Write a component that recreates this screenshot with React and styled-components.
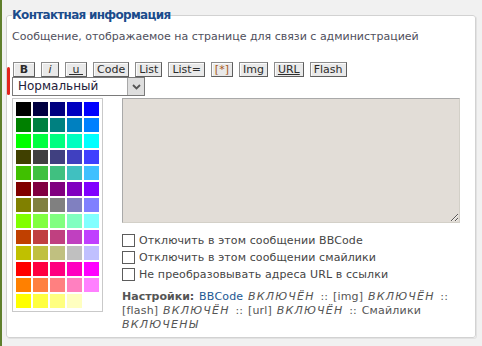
import React from 'react';
import styled, { createGlobalStyle } from 'styled-components';

const GlobalStyle = createGlobalStyle`
  html, body {
    margin: 0;
    padding: 0;
    background: #f1f1f1;
  }
  body {
    font-family: "DejaVu Sans", Verdana, sans-serif;
  }
`;

const Page = styled.div`
  position: relative;
  box-sizing: border-box;
  height: 346px;
  border-left: 2px solid #5f7f2c;
  padding: 8px 6px 0 4px;
`;

const EditMark = styled.span`
  position: absolute;
  left: 5px;
  top: 67px;
  width: 3px;
  height: 28px;
  border-radius: 2px;
  background: #e3241d;
`;

const Fieldset = styled.fieldset`
  margin: 0;
  min-width: 0;
  height: 330px;
  box-sizing: border-box;
  padding: 0 5px;
  background: #fff;
  border: 1px solid #d2d2d2;
  border-radius: 3px;
  box-shadow: 1px 1px 0 #e2e2e2;
`;

const Legend = styled.legend`
  padding: 0;
  font-size: 12px;
  font-weight: bold;
  line-height: 15px;
  letter-spacing: -0.7px;
  color: #1b4c8c;
`;

const Description = styled.p`
  margin: 7px 0 0;
  font-size: 11px;
  line-height: 14px;
  color: #4f4f5c;
`;

const Toolbar = styled.div`
  display: flex;
  gap: 6px;
  margin-top: 18px;
  padding-left: 1px;
`;

const TagButton = styled.button`
  box-sizing: border-box;
  height: 15px;
  min-width: ${p => p.$width || 0}px;
  margin: 0;
  padding: 0 3px;
  font-family: "DejaVu Sans", Verdana, sans-serif;
  font-size: 11px;
  line-height: 13px;
  font-weight: ${p => (p.$bold ? 'bold' : 'normal')};
  font-style: ${p => (p.$italic ? 'italic' : 'normal')};
  text-decoration: ${p => (p.$underline ? 'underline' : 'none')};
  color: ${p => p.$tint || '#2c2c2c'};
  background: #e9e9e9;
  border: 1px solid;
  border-color: #8c8c8c #5e5e5e #5e5e5e #8c8c8c;
  box-shadow: inset 1px 1px 0 #fbfbfb;
  border-radius: 0;
  white-space: pre;
`;

const SizeSelect = styled.div`
  display: flex;
  box-sizing: border-box;
  width: 133px;
  height: 19px;
  border: 1px solid #7a7a7a;
  background: #fff;
`;

const SelectValue = styled.span`
  flex: 1;
  padding-left: 5px;
  font-size: 12px;
  line-height: 17px;
  color: #24203a;
`;

const SelectArrow = styled.span`
  display: flex;
  align-items: center;
  justify-content: center;
  width: 16px;
  background: #dedede;
  border-left: 1px solid #a8a8a8;
`;

const EditorRow = styled.div`
  display: flex;
  gap: 19px;
  margin-top: 2px;
`;

const Palette = styled.div`
  display: grid;
  grid-template-columns: repeat(5, 15px);
  grid-auto-rows: 14px;
  gap: 2px;
  align-self: flex-start;
  padding: 3px;
  border: 1px solid #c9c9c9;
  background: #fff;
`;

const Swatch = styled.span`
  background: ${p => p.$color};
`;

const MainColumn = styled.div`
  display: flex;
  flex-direction: column;
  width: 338px;
`;

const MessageArea = styled.textarea`
  display: block;
  box-sizing: border-box;
  width: 338px;
  height: 125px;
  margin: 0;
  padding: 2px;
  background: #e2ddd7;
  border: 1px solid;
  border-color: #a9a9a9 #d3d0c8 #d3d0c8 #a9a9a9;
  outline: none;
`;

const Options = styled.div`
  margin-top: 9px;
`;

const OptionRow = styled.label`
  display: flex;
  align-items: center;
  height: 17px;
  font-size: 11px;
  letter-spacing: 0.1px;
  color: #454545;
`;

const Check = styled.input`
  appearance: none;
  box-sizing: border-box;
  width: 13px;
  height: 13px;
  margin: 0 4px 0 0;
  border: 1px solid #5c5c5c;
  background: #fff;
`;

const Settings = styled.div`
  margin-top: 7px;
  font-size: 11px;
  line-height: 14px;
  letter-spacing: 0.2px;
  word-spacing: 1px;
  color: #555;
`;

const Run = styled.span`
  color: ${p => (p.$link ? '#1d5793' : 'inherit')};
  font-weight: ${p => (p.$bold ? 'bold' : 'normal')};
  font-style: ${p => (p.$state ? 'italic' : 'normal')};
  letter-spacing: ${p => (p.$state ? '1.2px' : p.$bold ? '0' : 'inherit')};
`;

const buttons = [
  { label: 'B', bold: true, width: 22 },
  { label: 'i', italic: true, width: 18 },
  { label: '\u00a0u\u00a0', underline: true, width: 22 },
  { label: 'Code' },
  { label: 'List' },
  { label: 'List=' },
  { label: '[*]', tint: '#a8581c' },
  { label: 'Img' },
  { label: 'URL', underline: true },
  { label: 'Flash' },
];

const settingsRuns = [
  { text: 'Настройки:', bold: true },
  { text: 'BBCode', link: true },
  { text: 'ВКЛЮЧЁН', state: true },
  { text: '::' },
  { text: '[img]' },
  { text: 'ВКЛЮЧЁН', state: true },
  { text: '::' },
  { text: '[flash]' },
  { text: 'ВКЛЮЧЁН', state: true },
  { text: '::' },
  { text: '[url]' },
  { text: 'ВКЛЮЧЁН', state: true },
  { text: '::' },
  { text: 'Смайлики' },
  { text: 'ВКЛЮЧЕНЫ', state: true },
];

const levels = ['00', '40', '80', 'C0', 'FF'];
const paletteRows = [
  ['00', '00'], ['00', '80'], ['00', 'FF'],
  ['40', '40'], ['40', 'C0'],
  ['80', '00'], ['80', '80'], ['80', 'FF'],
  ['C0', '40'], ['C0', 'C0'],
  ['FF', '00'], ['FF', '80'], ['FF', 'FF'],
];

const App = () => {
  const swatches = [];
  paletteRows.forEach(([r, g], row) => {
    levels.forEach((b, col) => {
      const isLast = row === paletteRows.length - 1 && col === 4;
      swatches.push(
        <Swatch key={`${row}-${col}`} $color={isLast ? 'transparent' : `#${r}${g}${b}`} />
      );
    });
  });

  return (
    <Page>
      <GlobalStyle />
      <EditMark />
      <Fieldset>
        <Legend>Контактная информация</Legend>
        <Description>Сообщение, отображаемое на странице для связи с администрацией</Description>

        <Toolbar>
          {buttons.map(b => (
            <TagButton
              key={b.label}
              $bold={b.bold}
              $italic={b.italic}
              $underline={b.underline}
              $width={b.width}
              $tint={b.tint}
            >
              {b.label}
            </TagButton>
          ))}
        </Toolbar>

        <SizeSelect>
          <SelectValue>Нормальный</SelectValue>
          <SelectArrow>
            <svg width="9" height="6" viewBox="0 0 9 6">
              <path d="M1 1 L4.5 4.5 L8 1" fill="none" stroke="#555" strokeWidth="1.8" />
            </svg>
          </SelectArrow>
        </SizeSelect>

        <EditorRow>
          <Palette>{swatches}</Palette>
          <MainColumn>
            <MessageArea readOnly />
            <Options>
              <OptionRow><Check type="checkbox" />Отключить в этом сообщении BBCode</OptionRow>
              <OptionRow><Check type="checkbox" />Отключить в этом сообщении смайлики</OptionRow>
              <OptionRow><Check type="checkbox" />Не преобразовывать адреса URL в ссылки</OptionRow>
            </Options>
            <Settings>
              {settingsRuns.map((r, i) => (
                <Run key={i} $bold={r.bold} $link={r.link} $state={r.state}>
                  {i < settingsRuns.length - 1 ? `${r.text} ` : r.text}
                </Run>
              ))}
            </Settings>
          </MainColumn>
        </EditorRow>
      </Fieldset>
    </Page>
  );
};

export default App;
